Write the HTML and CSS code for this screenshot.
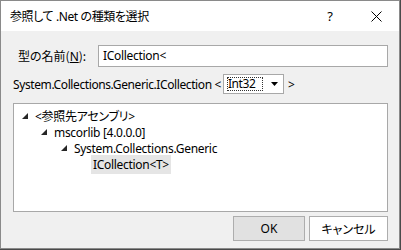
FILE: index.html
```html
<!DOCTYPE html>
<html lang="ja">
<head>
    <meta charset="UTF-8">
    <title>参照して .Net の種類を選択</title>
    <link rel="stylesheet" href="styles.css">
</head>
<body>
    <div class="window">
        <div class="titlebar">
            <span class="title">参照して .Net の種類を選択</span>
            <span class="caption-btn">?</span>
            <span class="caption-btn close">
                <svg width="11" height="11" viewBox="0 0 11 11"><path d="M0.5 0.5 L10.5 10.5 M10.5 0.5 L0.5 10.5" stroke="#000" stroke-width="1"/></svg>
            </span>
        </div>
        <div class="content">
            <div class="name-row">
                <label class="name-label">型の名前(<u>N</u>):</label>
                <div class="textbox">ICollection&lt;</div>
            </div>
            <div class="generic-row">
                <span>System.Collections.Generic.ICollection &lt;</span>
                <div class="combo">
                    <span class="combo-value">Int32</span>
                    <svg class="combo-arrow" width="7" height="4" viewBox="0 0 7 4"><polygon points="0,0 7,0 3.5,4" fill="#000"/></svg>
                </div>
                <span class="close-angle">&gt;</span>
            </div>
            <div class="tree">
                <div class="node level-0">
                    <svg class="expander" width="6" height="6" viewBox="0 0 6 6"><polygon points="6,0 6,6 0,6" fill="#262626"/></svg>
                    <span class="node-text">&lt;参照先アセンブリ&gt;</span>
                </div>
                <div class="node level-1">
                    <svg class="expander" width="6" height="6" viewBox="0 0 6 6"><polygon points="6,0 6,6 0,6" fill="#262626"/></svg>
                    <span class="node-text">mscorlib [4.0.0.0]</span>
                </div>
                <div class="node level-2">
                    <svg class="expander" width="6" height="6" viewBox="0 0 6 6"><polygon points="6,0 6,6 0,6" fill="#262626"/></svg>
                    <span class="node-text">System.Collections.Generic</span>
                </div>
                <div class="node level-3">
                    <span class="expander blank"></span>
                    <span class="node-text selected">ICollection&lt;T&gt;</span>
                </div>
            </div>
            <div class="buttons">
                <button class="btn default">OK</button>
                <button class="btn">キャンセル</button>
            </div>
        </div>
    </div>
</body>
</html>
```

FILE: styles.css
```css
body {
    margin: 0;
    background-color: #4a4a4a;
    font-family: "Noto Sans", "Noto Sans CJK JP", sans-serif;
    font-size: 12px;
    font-feature-settings: "palt";
    color: #000;
}
.window {
    width: 398px;
    height: 247px;
    border: 1px solid #8a8a8a;
    background-color: #f0f0f0;
    display: flex;
    flex-direction: column;
}
.titlebar {
    height: 30px;
    background-color: #fff;
    display: flex;
    align-items: center;
    padding-left: 9px;
}
.title {
    flex: 1;
    font-size: 12px;
    letter-spacing: -0.4px;
}
.caption-btn {
    width: 46px;
    height: 30px;
    display: flex;
    align-items: center;
    justify-content: center;
    font-size: 13px;
}
.content {
    flex: 1;
    padding: 14px 11px 0 12px;
    display: flex;
    flex-direction: column;
}
.name-row {
    display: flex;
    align-items: center;
    height: 22px;
}
.name-label {
    width: 80px;
    padding-left: 5px;
    font-family: "Noto Sans CJK JP", sans-serif;
}
.name-label u {
    font-family: "Noto Sans", sans-serif;
}
.textbox {
    flex: 1;
    height: 20px;
    line-height: 20px;
    border: 1px solid #a8a8a8;
    background-color: #fff;
    padding-left: 4px;
    letter-spacing: -0.3px;
}
.generic-row {
    display: flex;
    align-items: center;
    margin-top: 7px;
    height: 20px;
    gap: 2px;
    letter-spacing: -0.4px;
}
.close-angle {
    margin-left: 2px;
}
.combo {
    width: 51px;
    height: 18px;
    border: 1px solid #a8a8a8;
    background-color: #fff;
    display: flex;
    align-items: center;
    padding: 0 5px 0 3px;
}
.combo-value {
    flex: 1;
    outline: 1px dotted #333;
    outline-offset: -1px;
    height: 14px;
    line-height: 14px;
    margin-right: 8px;
    padding-left: 1px;
}
.combo-arrow {
    display: block;
}
.tree {
    margin-top: 9px;
    height: 103px;
    border: 1px solid #a8a8a8;
    background-color: #fff;
    padding-top: 4px;
}
.node {
    display: flex;
    align-items: center;
    height: 16px;
}
.expander {
    width: 6px;
    margin-right: 7px;
    flex-shrink: 0;
}
.level-0 { padding-left: 8px; }
.level-1 { padding-left: 27px; }
.level-2 { padding-left: 47px; }
.level-3 { padding-left: 63px; }
.node-text {
    white-space: nowrap;
    letter-spacing: -0.3px;
}
.node-text.selected {
    background-color: #e5e5e5;
    padding: 1px 2px;
    margin-left: 1px;
}
.buttons {
    display: flex;
    justify-content: flex-end;
    gap: 4px;
    margin-top: 4px;
}
.btn {
    height: 25px;
    border: 1px solid #adadad;
    background-color: #fff;
    font-family: "Noto Sans", "Noto Sans CJK JP", sans-serif;
    font-feature-settings: "palt";
    font-size: 12px;
    padding: 0;
    width: 79px;
}
.btn.default {
    width: 72px;
    background-color: #e1e1e1;
}
```
